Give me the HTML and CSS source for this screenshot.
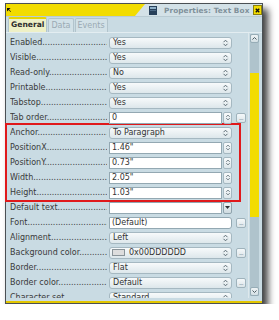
FILE: index.html
```html
<!DOCTYPE HTML>
<html>
<head>
  <title>Properties: Text Box</title>
  <meta charset="utf-8">
  <link rel="stylesheet" href="styles.css">
</head>
<body>
  <svg class="defs">
    <symbol id="updown" viewBox="0 0 7 10"><path d="M1.5 4.2 3.5 2.2 5.5 4.2M1.5 5.8 3.5 7.8 5.5 5.8"/></symbol>
    <symbol id="up" viewBox="0 0 7 5"><path d="M1.5 3.5 3.5 1.5 5.5 3.5"/></symbol>
  </svg>

  <div class="window">
    <div class="titlebar">
      <div class="accent">
        <svg class="grip" viewBox="0 0 5 5"><path d="M0 0H4.5L2.5 2 5 4.5 4.5 5 2 2.5 0 4.5Z"/></svg>
      </div>
      <svg class="wicon" viewBox="0 0 8 9"><rect x="0" y="0" width="8" height="9" fill="#27405a"/><rect x="1" y="1" width="6" height="2" fill="#8fb0c8"/><rect x="1" y="4" width="6" height="1" fill="#4d6a86"/></svg>
      <span class="title">Properties: Text Box</span>
      <span class="close"><svg viewBox="0 0 8 8"><path d="M2 2 6 6M6 2 2 6"/></svg></span>
    </div>

    <div class="tabs">
      <span class="tab active">General</span>
      <span class="tab">Data</span>
      <span class="tab">Events</span>
    </div>

    <div class="pane">
      <div class="list">
        <div class="row"><span class="label">Enabled</span><span class="combo">Yes<svg class="chev"><use href="#updown"/></svg></span></div>
        <div class="row"><span class="label">Visible</span><span class="combo">Yes<svg class="chev"><use href="#updown"/></svg></span></div>
        <div class="row"><span class="label">Read-only</span><span class="combo">No<svg class="chev"><use href="#updown"/></svg></span></div>
        <div class="row"><span class="label">Printable</span><span class="combo">Yes<svg class="chev"><use href="#updown"/></svg></span></div>
        <div class="row"><span class="label">Tabstop</span><span class="combo">Yes<svg class="chev"><use href="#updown"/></svg></span></div>
        <div class="row"><span class="label">Tab order</span><span class="spin"><span class="text">0</span><span class="spinbtn"><svg class="chev"><use href="#updown"/></svg></span></span><span class="more">...</span></div>

        <div class="marked">
          <div class="row"><span class="label">Anchor</span><span class="combo">To Paragraph<svg class="chev"><use href="#updown"/></svg></span></div>
          <div class="row"><span class="label">PositionX</span><span class="spin"><span class="text">1.46"</span><span class="spinbtn"><svg class="chev"><use href="#updown"/></svg></span></span></div>
          <div class="row"><span class="label">PositionY</span><span class="spin"><span class="text">0.73"</span><span class="spinbtn"><svg class="chev"><use href="#updown"/></svg></span></span></div>
          <div class="row"><span class="label">Width</span><span class="spin"><span class="text">2.05"</span><span class="spinbtn"><svg class="chev"><use href="#updown"/></svg></span></span></div>
          <div class="row"><span class="label">Height</span><span class="spin"><span class="text">1.03"</span><span class="spinbtn"><svg class="chev"><use href="#updown"/></svg></span></span></div>
        </div>

        <div class="row"><span class="label">Default text</span><span class="spin"><span class="text"></span><span class="dropbtn"><svg viewBox="0 0 5 3"><path d="M0 0H5L2.5 3Z"/></svg></span></span></div>
        <div class="row"><span class="label">Font</span><span class="field">(Default)</span><span class="more">...</span></div>
        <div class="row"><span class="label">Alignment</span><span class="combo">Left<svg class="chev"><use href="#updown"/></svg></span></div>
        <div class="row"><span class="label">Background color</span><span class="combo"><span class="swatch"></span>0x00DDDDDD<svg class="chev"><use href="#updown"/></svg></span><span class="more">...</span></div>
        <div class="row"><span class="label">Border</span><span class="combo">Flat<svg class="chev"><use href="#updown"/></svg></span></div>
        <div class="row"><span class="label">Border color</span><span class="combo">Default<svg class="chev"><use href="#updown"/></svg></span><span class="more">...</span></div>
        <div class="row"><span class="label">Character set</span><span class="combo">Standard<svg class="chev"><use href="#updown"/></svg></span></div>
      </div>

      <div class="scrollbar">
        <span class="arrow"><svg><use href="#up"/></svg></span>
        <div class="trough"><div class="thumb"></div></div>
        <span class="arrow down"><svg><use href="#up"/></svg></span>
      </div>
    </div>
  </div>
</body>
</html>
```

FILE: styles.css
```css
html, body{
  margin: 0; padding: 0;
}
body{
 background: #fff;
 color: #3a3a3a;
 font-family: "DejaVu Sans", sans-serif;
 font-size: 8px;
}
.defs{
 display: none;
}

.window{
 box-sizing: border-box;
 margin: 3px 0 0 5px;
 width: 258px;
 height: 301px;
 border: 1px solid #4a5054;
 background: #c9dbe3;
 display: flex;
 flex-direction: column;
 box-shadow: 5px 6px 7px rgba(0,0,0,.75);
}

/* title bar */
.titlebar{
 height: 12px;
 display: flex;
 align-items: center;
 background: #d3e1e7;
 border-bottom: 1px solid #b9cbd3;
}
.accent{
 align-self: stretch;
 width: 139px;
 background: #f2dc00;
 clip-path: polygon(0 0, 100% 0, calc(100% - 10px) 100%, 0 100%);
 display: flex;
 align-items: center;
}
.grip{
 width: 4px; height: 4px;
 margin-left: 1px;
 fill: #111;
}
.wicon{
 width: 8px; height: 9px;
 margin-left: 4px;
}
.title{
 margin-left: 7px;
 padding-top: 1px;
 font-size: 7.3px;
 font-weight: bold;
 color: #7f909a;
 letter-spacing: .1px;
}
.close{
 margin-left: auto;
 width: 9px; height: 10px;
 box-sizing: border-box;
 border: 1px solid #8a7f10;
 background: #f2dc00;
 display: flex;
 align-items: center;
 justify-content: center;
}
.close svg{
 width: 7px; height: 7px;
 stroke: #111;
 stroke-width: 1.6;
}

/* tabs */
.tabs{
 height: 15px;
 display: flex;
 align-items: flex-end;
 gap: 1px;
 padding-left: 2px;
}
.tab{
 height: 14px;
 box-sizing: border-box;
 padding: 0 2px;
 border: 1px solid #b2c4cc;
 border-bottom: none;
 border-radius: 2px 2px 0 0;
 background: #d2e1e7;
 color: #9aaab3;
 font-size: 8px;
 line-height: 13px;
}
.tab.active{
 height: 15px;
 background: #eef0c6;
 border-top: 2px solid #e6d600;
 color: #2e2e2e;
 font-size: 7.6px;
 font-weight: bold;
 line-height: 12px;
}

/* property pane */
.pane{
 flex: 1;
 min-height: 0;
 display: flex;
 border-top: 1px solid #e3edf1;
 border-bottom: 2px solid #e2c600;
}
.list{
 flex: 1;
 min-height: 0;
 padding-top: 2px;
 margin-bottom: 3px;
 overflow-x: visible;
 overflow-y: clip;
 border-right: 1px solid #dde8ec;
}
.row{
 display: flex;
 align-items: center;
 height: 15px;
 padding-left: 4px;
}
.label{
 width: 97px;
 margin-right: 2px;
 overflow: hidden;
 white-space: nowrap;
}
.label::after{
 content: "............................................................";
}

.combo, .spin, .field{
 box-sizing: border-box;
 width: 123px;
 height: 12px;
 display: flex;
 align-items: center;
 white-space: nowrap;
 color: #333;
}
.combo{
 padding-left: 3px;
 border: 1px solid #a5b8c1;
 border-radius: 3px;
 background: linear-gradient(#f7fafb, #dde7eb);
}
.field{
 padding-left: 2px;
 border: 1px solid #93a8b2;
 border-radius: 0 3px 3px 0;
 background: #fff;
}
.spin .text{
 flex: 1;
 align-self: stretch;
 box-sizing: border-box;
 padding-left: 2px;
 border: 1px solid #93a8b2;
 background: #fff;
 line-height: 10px;
}
.chev{
 width: 7px; height: 10px;
 margin-left: auto;
 margin-right: 2px;
 fill: none;
 stroke: #5b6b73;
 stroke-width: 1;
}
.spinbtn, .dropbtn{
 box-sizing: border-box;
 width: 9px; height: 12px;
 margin-left: 1px;
 border: 1px solid #a5b8c1;
 border-radius: 2px;
 background: linear-gradient(#f7fafb, #dde7eb);
 display: flex;
 align-items: center;
 justify-content: center;
}
.spinbtn .chev{
 margin: 0;
 width: 6px; height: 9px;
}
.dropbtn{
 border-color: #8fa3ad;
 background: linear-gradient(#eef3f5, #cfdbe0);
}
.dropbtn svg{
 width: 5px; height: 3px;
 fill: #2c3236;
}
.swatch{
 width: 13px; height: 7px;
 box-sizing: border-box;
 border: 1px solid #8a9499;
 background: #dddddd;
 margin: 0 4px 0 -1px;
}
.more{
 box-sizing: border-box;
 width: 10px; height: 10px;
 margin-left: 4px;
 border: 1px solid #9fb3bc;
 border-radius: 2px;
 background: linear-gradient(#f4f8fa, #dbe5e9);
 color: #66757c;
 font-size: 6px;
 line-height: 7px;
 text-align: center;
 letter-spacing: -.5px;
}

/* red annotation box */
.marked{
 box-sizing: border-box;
 width: 236px;
 margin: -2px 0 -2px -1px;
 border: 2px solid #e0191b;
}
.marked .row{
 padding-left: 3px;
}

/* scrollbar */
.scrollbar{
 width: 9px;
 margin: 1px 3px 5px 1px;
 display: flex;
 flex-direction: column;
 background: #afc3cc;
}
.arrow{
 box-sizing: border-box;
 height: 9px;
 border: 1px solid #97adb7;
 border-radius: 2px;
 background: linear-gradient(#eef3f5, #d3dfe4);
 display: flex;
 align-items: center;
 justify-content: center;
}
.arrow svg{
 width: 7px; height: 5px;
 fill: none;
 stroke: #4d5c63;
}
.arrow.down svg{
 transform: rotate(180deg);
}
.trough{
 flex: 1;
 padding-top: 30px;
}
.thumb{
 height: 144px;
 background: #f2dc00;
}
```
